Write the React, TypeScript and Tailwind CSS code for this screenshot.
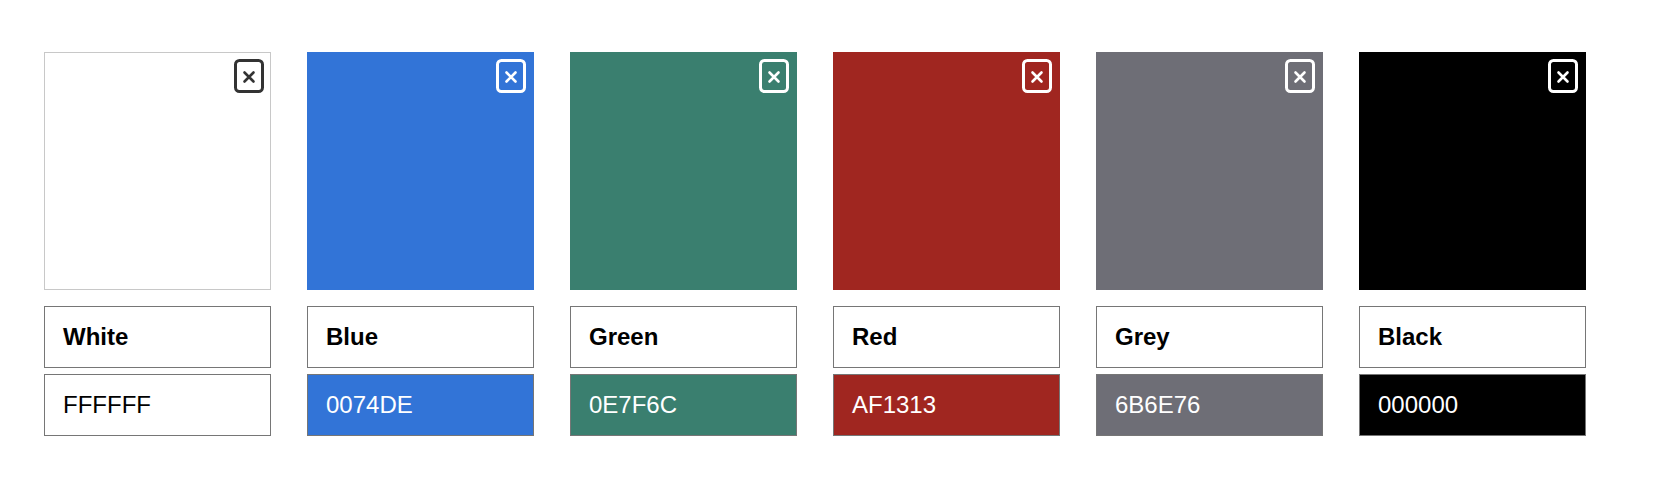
import React from "react";

type Swatch = {
  name: string;
  hex: string;
  bg: string;
  light: boolean;
};

const swatches: Swatch[] = [
  { name: "White", hex: "FFFFFF", bg: "bg-white", light: true },
  { name: "Blue", hex: "0074DE", bg: "bg-[#3274d7]", light: false },
  { name: "Green", hex: "0E7F6C", bg: "bg-[#3a7f6f]", light: false },
  { name: "Red", hex: "AF1313", bg: "bg-[#a02620]", light: false },
  { name: "Grey", hex: "6B6E76", bg: "bg-[#6e6e76]", light: false },
  { name: "Black", hex: "000000", bg: "bg-black", light: false },
];

function CloseIcon({ dark }: { dark: boolean }) {
  const c = dark ? "#333333" : "#ffffff";
  return (
    <svg width="30" height="34" viewBox="0 0 30 34" fill="none">
      <rect x="1.5" y="1.5" width="27" height="31" rx="4" stroke={c} strokeWidth="3" />
      <path d="M10.5 13.5 L19.5 22.5 M19.5 13.5 L10.5 22.5" stroke={c} strokeWidth="2.6" strokeLinecap="round" />
    </svg>
  );
}

function SwatchCard({ s }: { s: Swatch }) {
  return (
    <div className="flex w-[227px] flex-col">
      <div
        className={`relative h-[238px] w-full ${s.bg} ${
          s.light ? "border border-[#c8c8c8]" : ""
        }`}
      >
        <button
          type="button"
          className={`absolute ${s.light ? "top-[6px] right-[6px]" : "top-[7px] right-[8px]"} flex`}
        >
          <CloseIcon dark={s.light} />
        </button>
      </div>
      <div className="mt-[16px] flex h-[62px] items-center border border-[#767676] bg-white pl-[18px] text-[24px] font-bold text-black">
        {s.name}
      </div>
      <div
        className={`mt-[6px] flex h-[62px] items-center border border-[#767676] pl-[18px] text-[24px] ${s.bg} ${
          s.light ? "text-black" : "text-white"
        }`}
      >
        {s.hex}
      </div>
    </div>
  );
}

export default function App() {
  return (
    <div
      className="h-[482px] w-[1676px] bg-white pl-[44px] pt-[52px]"
      style={{ fontFamily: '"Liberation Sans", Arial, sans-serif' }}
    >
      <div className="flex gap-[36px]">
        {swatches.map((s) => (
          <SwatchCard key={s.name} s={s} />
        ))}
      </div>
    </div>
  );
}
